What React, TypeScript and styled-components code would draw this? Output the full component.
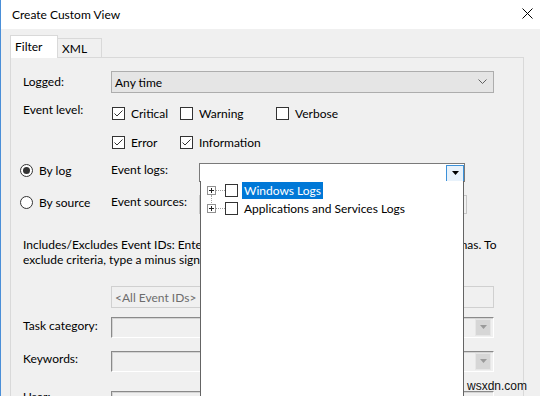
import React from "react";
import styled, { createGlobalStyle } from "styled-components";

const Global = createGlobalStyle`
  html, body { margin: 0; padding: 0; background: #f0f0f0; overflow: hidden; }
  body { font-family: Lato, "Noto Sans", sans-serif; font-size: 12px; color: #000; }
  * { box-sizing: border-box; }
`;

const Window = styled.div`
  position: relative;
  width: 540px;
  height: 396px;
  overflow: hidden;
  background: #f0f0f0;
  border-left: 1px solid #4a8fd8;
  display: flex;
  flex-direction: column;
`;

const TitleBar = styled.div`
  height: 29px;
  flex-shrink: 0;
  background: #fff;
  display: flex;
  align-items: flex-start;
  justify-content: space-between;
  padding-left: 11px;
`;

const TitleText = styled.span`
  line-height: 30px;
  font-size: 12px;
`;

const CloseBox = styled.div`
  width: 26px;
  height: 26px;
  display: flex;
  align-items: center;
  justify-content: center;
`;

const Body = styled.div`
  flex: 1;
  padding: 6px 0 0 9px;
  display: flex;
  flex-direction: column;
`;

const TabStrip = styled.div`
  display: flex;
  align-items: flex-end;
  height: 22px;
  position: relative;
  z-index: 2;
`;

const Tab = styled.div<{ $active?: boolean; $w: number }>`
  width: ${(p) => p.$w}px;
  height: ${(p) => (p.$active ? 23 : 19)}px;
  margin-bottom: ${(p) => (p.$active ? -1 : 0)}px;
  border: 1px solid #d9d9d9;
  border-bottom: none;
  border-left: ${(p) => (p.$active ? "1px solid #d9d9d9" : "none")};
  background: ${(p) => (p.$active ? "#ffffff" : "#f0f0f0")};
  padding-left: 4px;
  display: flex;
  align-items: center;
  padding-bottom: ${(p) => (p.$active ? 1 : 0)}px;
`;

const Panel = styled.div`
  width: 514px;
  flex: 1;
  border: 1px solid #d9d9d9;
  border-bottom: none;
  background: #f0f0f0;
  padding: 13px 0 0 12px;
  display: flex;
  flex-direction: column;
`;

const Row = styled.div<{ $gap: number; $h: number; $top?: boolean }>`
  display: flex;
  align-items: ${(p) => (p.$top ? "flex-start" : "center")};
  height: ${(p) => p.$h}px;
  margin-top: ${(p) => p.$gap}px;
  position: relative;
  flex-shrink: 0;
`;

const Label = styled.span<{ $w: number; $dy?: number }>`
  width: ${(p) => p.$w}px;
  flex-shrink: 0;
  white-space: nowrap;
  line-height: 14px;
  ${(p) => (p.$dy !== undefined ? `align-self: flex-start; margin-top: ${p.$dy}px;` : "")}
`;

const ComboBox = styled.div`
  width: 383px;
  height: 22px;
  background: #e5e5e5;
  border: 1px solid #adadad;
  display: flex;
  align-items: center;
  justify-content: space-between;
  padding: 0 6px 0 3px;
`;

const CheckGroup = styled.div`
  display: grid;
  grid-template-columns: 68px 96px auto;
  align-items: center;
  padding-left: 1px;
`;

const CheckItem = styled.label`
  display: flex;
  align-items: center;
  gap: 6px;
  white-space: nowrap;
`;

const Box = styled.span`
  width: 13px;
  height: 13px;
  border: 1px solid #333;
  background: #fff;
  display: inline-flex;
  align-items: center;
  justify-content: center;
  flex-shrink: 0;
`;

const RadioItem = styled.label`
  width: 91px;
  height: 14px;
  margin-left: -3px;
  display: flex;
  align-items: center;
  gap: 6px;
  white-space: nowrap;
`;

const RadioCircle = styled.span<{ $on?: boolean }>`
  width: 13px;
  height: 13px;
  border-radius: 50%;
  border: 1px solid #333;
  background: #fff;
  display: inline-flex;
  align-items: center;
  justify-content: center;
  flex-shrink: 0;
  &::after {
    content: "";
    display: ${(p) => (p.$on ? "block" : "none")};
    width: 7px;
    height: 7px;
    border-radius: 50%;
    background: #333;
  }
`;

const LogCombo = styled.div`
  position: relative;
  width: 266px;
  height: 19px;
  background: #fff;
  border: 1px solid #7a7a7a;
  display: flex;
  justify-content: flex-end;
  z-index: 3;
`;

const DropButton = styled.div`
  width: 18px;
  height: 17px;
  margin-top: 1px;
  border: 1px solid #3c91d9;
  background: #e8f2fb;
  display: flex;
  align-items: center;
  justify-content: center;
`;

const DropList = styled.div`
  position: absolute;
  top: 100%;
  left: 0;
  width: 264px;
  height: 240px;
  background: #fff;
  border: 1px solid #646464;
  border-top: none;
`;

const TreeItem = styled.div`
  height: 18px;
  display: flex;
  align-items: center;
  padding-left: 6px;
`;

const Expander = styled.span<{ $next?: boolean }>`
  position: relative;
  width: 9px;
  height: 9px;
  border: 1px solid #919191;
  background: #fff;
  display: inline-flex;
  align-items: center;
  justify-content: center;
  flex-shrink: 0;
  &::after {
    content: "";
    display: ${(p) => (p.$next ? "block" : "none")};
    position: absolute;
    left: 3px;
    top: 8px;
    height: 10px;
    border-left: 1px dotted #a0a0a0;
  }
`;

const Connector = styled.span`
  width: 9px;
  border-top: 1px dotted #a0a0a0;
  flex-shrink: 0;
`;

const TreeText = styled.span<{ $sel?: boolean }>`
  margin-left: 4px;
  height: 17px;
  line-height: 17px;
  padding: 0 2px;
  white-space: nowrap;
  background: ${(p) => (p.$sel ? "#0078d7" : "transparent")};
  color: ${(p) => (p.$sel ? "#fff" : "#000")};
`;

const SourceCombo = styled.div`
  width: 268px;
  height: 19px;
  border: 1px solid #c6c6c6;
  background: #f0f0f0;
`;

const Para = styled.p<{ $gap: number }>`
  margin: ${(p) => p.$gap}px 0 0 0;
  line-height: 15px;
  white-space: nowrap;
`;

const DisabledText = styled.div`
  width: 383px;
  height: 22px;
  border: 1px solid #d0d0d0;
  background: #f0f0f0;
  color: #6d6d6d;
  display: flex;
  align-items: center;
  padding-left: 3px;
`;

const SunkenCombo = styled.div`
  width: 383px;
  height: 21px;
  border-top: 1px solid #8a8a8a;
  border-left: 1px solid #8a8a8a;
  border-right: 1px solid #fff;
  border-bottom: 1px solid #fff;
  box-shadow: inset 1px 1px 0 #d4d4d4;
  background: #f0f0f0;
  display: flex;
  justify-content: flex-end;
  align-items: center;
  padding-right: 2px;
`;

const GreyButton = styled.div`
  width: 16px;
  height: 17px;
  background: #d6d6d6;
  border: 1px solid #e6e6e6;
  display: flex;
  align-items: center;
  justify-content: center;
`;

const Watermark = styled.span`
  position: absolute;
  left: 466px;
  top: 379px;
  font-family: "Liberation Sans", Arial, sans-serif;
  font-size: 12px;
  line-height: 14px;
  color: #111;
`;

const Check = ({ on }: { on?: boolean }) => (
  <Box>
    {on && (
      <svg width="11" height="11" viewBox="0 0 11 11">
        <path d="M1.5 5.5 L4 8 L9.5 2.5" fill="none" stroke="#333" strokeWidth="1" />
      </svg>
    )}
  </Box>
);

const Chevron = () => (
  <svg width="9" height="6" viewBox="0 0 9 6">
    <path d="M0.5 0.5 L4.5 4.5 L8.5 0.5" fill="none" stroke="#606060" strokeWidth="1" />
  </svg>
);

const Triangle = ({ color, w = 7 }: { color: string; w?: number }) => (
  <svg width={w} height={Math.ceil(w / 2) + 1} viewBox={`0 0 ${w} ${Math.ceil(w / 2) + 1}`}>
    <path d={`M0 0 L${w} 0 L${w / 2} ${w / 2 + 0.5} Z`} fill={color} />
  </svg>
);

const Plus = () => (
  <svg width="7" height="7" viewBox="0 0 7 7">
    <path d="M1 3.5 H6 M3.5 1 V6" stroke="#222" strokeWidth="1" />
  </svg>
);

export default function App() {
  return (
    <>
      <Global />
      <Window>
        <TitleBar>
          <TitleText>Create Custom View</TitleText>
          <CloseBox>
            <svg width="11" height="11" viewBox="0 0 11 11">
              <path d="M0.5 0.5 L10.5 10.5 M10.5 0.5 L0.5 10.5" stroke="#000" strokeWidth="1" />
            </svg>
          </CloseBox>
        </TitleBar>
        <Body>
          <TabStrip>
            <Tab $active $w={48}>Filter</Tab>
            <Tab $w={44}>XML</Tab>
          </TabStrip>
          <Panel>
            <Row $gap={0} $h={22}>
              <Label $w={88}>Logged:</Label>
              <ComboBox>
                <span>Any time</span>
                <Chevron />
              </ComboBox>
            </Row>
            <Row $gap={10} $h={20}>
              <Label $w={88} $dy={0}>Event level:</Label>
              <CheckGroup>
                <CheckItem><Check on />Critical</CheckItem>
                <CheckItem><Check />Warning</CheckItem>
                <CheckItem><Check />Verbose</CheckItem>
              </CheckGroup>
            </Row>
            <Row $gap={9} $h={20}>
              <Label $w={88} />
              <CheckGroup>
                <CheckItem><Check on />Error</CheckItem>
                <CheckItem><Check on />Information</CheckItem>
              </CheckGroup>
            </Row>
            <Row $gap={11} $h={19} $top>
              <RadioItem><RadioCircle $on />By log</RadioItem>
              <Label $w={88}>Event logs:</Label>
              <LogCombo>
                <DropButton>
                  <Triangle color="#000" />
                </DropButton>
                <DropList>
                  <TreeItem>
                    <Expander $next><Plus /></Expander>
                    <Connector />
                    <Check />
                    <TreeText $sel>Windows Logs</TreeText>
                  </TreeItem>
                  <TreeItem>
                    <Expander><Plus /></Expander>
                    <Connector />
                    <Check />
                    <TreeText>Applications and Services Logs</TreeText>
                  </TreeItem>
                </DropList>
              </LogCombo>
            </Row>
            <Row $gap={13} $h={19} $top>
              <RadioItem><RadioCircle />By source</RadioItem>
              <Label $w={88}>Event sources:</Label>
              <SourceCombo />
            </Row>
            <Para $gap={23}>
              Includes/Excludes Event IDs: Enter ID numbers and/or ID ranges separated by commas. To
              <br />
              exclude criteria, type a minus sign first. For example 1,3,5-99,-76
            </Para>
            <Row $gap={19} $h={22}>
              <Label $w={88} />
              <DisabledText>&lt;All Event IDs&gt;</DisabledText>
            </Row>
            <Row $gap={9} $h={21}>
              <Label $w={88} $dy={2}>Task category:</Label>
              <SunkenCombo>
                <GreyButton><Triangle color="#9a9a9a" /></GreyButton>
              </SunkenCombo>
            </Row>
            <Row $gap={13} $h={21}>
              <Label $w={88} $dy={1}>Keywords:</Label>
              <SunkenCombo>
                <GreyButton><Triangle color="#9a9a9a" /></GreyButton>
              </SunkenCombo>
            </Row>
            <Row $gap={19} $h={22} $top>
              <Label $w={88} $dy={-1}>User:</Label>
              <SunkenCombo />
            </Row>
          </Panel>
        </Body>
        <Watermark>wsxdn.com</Watermark>
      </Window>
    </>
  );
}
